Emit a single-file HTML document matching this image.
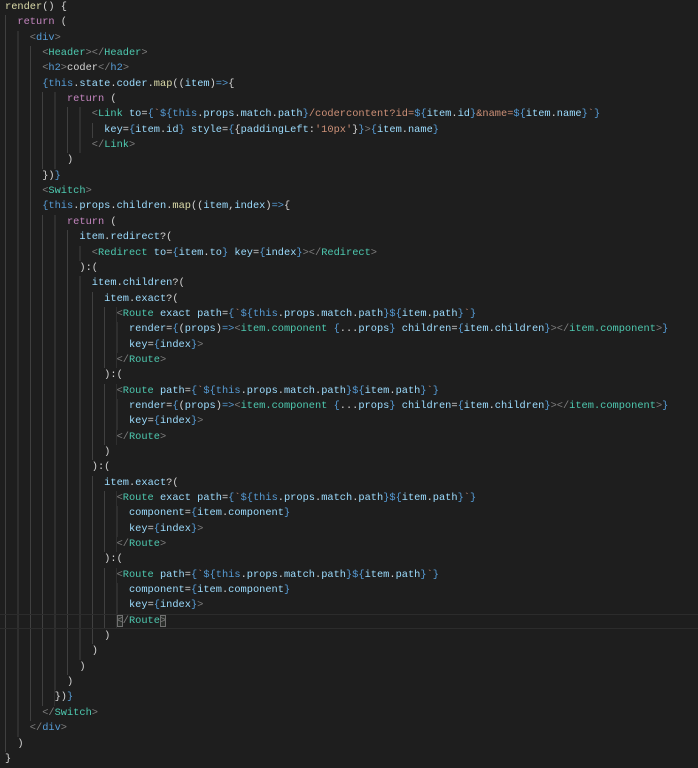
<!DOCTYPE html>
<html><head><meta charset="utf-8"><style>
html,body{margin:0;padding:0;background:#1e1e1e;width:698px;height:768px;overflow:hidden}
.code{margin:0;padding:0 0 0 5px;position:relative;top:0px;font-family:"Liberation Mono",monospace;font-size:10.33px;color:#d4d4d4}
.l{height:15.35px;line-height:15.35px;white-space:pre;box-sizing:border-box}
.g{display:inline-block;height:15.35px;vertical-align:top;background:repeating-linear-gradient(to right,#404040 0 1px,transparent 1px 12.4px)}
.k{color:#c586c0}.f{color:#dcdcaa}.t{color:#808080}.c{color:#4ec9b0}.h{color:#569cd6}.a{color:#9cdcfe}.s{color:#ce9178}.b{color:#569cd6}
.cur{border-top:1px solid #2c2c2c;border-bottom:1px solid #2c2c2c;margin-left:-5px;padding-left:5px;line-height:13.35px}
.cur .g{height:13.35px}
.m{outline:1px solid #707070;outline-offset:-1px;background:#2a2d2a}
</style></head><body><div class="code">
<div class="l"><span class="f">render</span>() {</div>
<div class="l"><span class="g">  </span><span class="k">return</span> (</div>
<div class="l"><span class="g">    </span><span class="t">&lt;</span><span class="h">div</span><span class="t">&gt;</span></div>
<div class="l"><span class="g">      </span><span class="t">&lt;</span><span class="c">Header</span><span class="t">&gt;&lt;/</span><span class="c">Header</span><span class="t">&gt;</span></div>
<div class="l"><span class="g">      </span><span class="t">&lt;</span><span class="h">h2</span><span class="t">&gt;</span>coder<span class="t">&lt;/</span><span class="h">h2</span><span class="t">&gt;</span></div>
<div class="l"><span class="g">      </span><span class="b">{</span><span class="h">this</span>.<span class="a">state</span>.<span class="a">coder</span>.<span class="f">map</span>((<span class="a">item</span>)<span class="h">=&gt;</span>{</div>
<div class="l"><span class="g">          </span><span class="k">return</span> (</div>
<div class="l"><span class="g">              </span><span class="t">&lt;</span><span class="c">Link</span> <span class="a">to</span>=<span class="b">{</span><span class="s">`</span><span class="b">${</span><span class="h">this</span>.<span class="a">props</span>.<span class="a">match</span>.<span class="a">path</span><span class="b">}</span><span class="s">/codercontent?id=</span><span class="b">${</span><span class="a">item</span>.<span class="a">id</span><span class="b">}</span><span class="s">&amp;name=</span><span class="b">${</span><span class="a">item</span>.<span class="a">name</span><span class="b">}</span><span class="s">`</span><span class="b">}</span></div>
<div class="l"><span class="g">                </span><span class="a">key</span>=<span class="b">{</span><span class="a">item</span>.<span class="a">id</span><span class="b">}</span> <span class="a">style</span>=<span class="b">{</span>{<span class="a">paddingLeft</span>:<span class="s">'10px'</span>}<span class="b">}</span><span class="t">&gt;</span><span class="b">{</span><span class="a">item</span>.<span class="a">name</span><span class="b">}</span></div>
<div class="l"><span class="g">              </span><span class="t">&lt;/</span><span class="c">Link</span><span class="t">&gt;</span></div>
<div class="l"><span class="g">          </span>)</div>
<div class="l"><span class="g">      </span>})<span class="b">}</span></div>
<div class="l"><span class="g">      </span><span class="t">&lt;</span><span class="c">Switch</span><span class="t">&gt;</span></div>
<div class="l"><span class="g">      </span><span class="b">{</span><span class="h">this</span>.<span class="a">props</span>.<span class="a">children</span>.<span class="f">map</span>((<span class="a">item</span>,<span class="a">index</span>)<span class="h">=&gt;</span>{</div>
<div class="l"><span class="g">          </span><span class="k">return</span> (</div>
<div class="l"><span class="g">            </span><span class="a">item</span>.<span class="a">redirect</span>?(</div>
<div class="l"><span class="g">              </span><span class="t">&lt;</span><span class="c">Redirect</span> <span class="a">to</span>=<span class="b">{</span><span class="a">item</span>.<span class="a">to</span><span class="b">}</span> <span class="a">key</span>=<span class="b">{</span><span class="a">index</span><span class="b">}</span><span class="t">&gt;&lt;/</span><span class="c">Redirect</span><span class="t">&gt;</span></div>
<div class="l"><span class="g">            </span>):(</div>
<div class="l"><span class="g">              </span><span class="a">item</span>.<span class="a">children</span>?(</div>
<div class="l"><span class="g">                </span><span class="a">item</span>.<span class="a">exact</span>?(</div>
<div class="l"><span class="g">                  </span><span class="t">&lt;</span><span class="c">Route</span> <span class="a">exact</span> <span class="a">path</span>=<span class="b">{</span><span class="s">`</span><span class="b">${</span><span class="h">this</span>.<span class="a">props</span>.<span class="a">match</span>.<span class="a">path</span><span class="b">}${</span><span class="a">item</span>.<span class="a">path</span><span class="b">}</span><span class="s">`</span><span class="b">}</span></div>
<div class="l"><span class="g">                    </span><span class="a">render</span>=<span class="b">{</span>(<span class="a">props</span>)<span class="h">=&gt;</span><span class="t">&lt;</span><span class="c">item.component</span> <span class="b">{</span>...<span class="a">props</span><span class="b">}</span> <span class="a">children</span>=<span class="b">{</span><span class="a">item</span>.<span class="a">children</span><span class="b">}</span><span class="t">&gt;&lt;/</span><span class="c">item.component</span><span class="t">&gt;</span><span class="b">}</span></div>
<div class="l"><span class="g">                    </span><span class="a">key</span>=<span class="b">{</span><span class="a">index</span><span class="b">}</span><span class="t">&gt;</span></div>
<div class="l"><span class="g">                  </span><span class="t">&lt;/</span><span class="c">Route</span><span class="t">&gt;</span></div>
<div class="l"><span class="g">                </span>):(</div>
<div class="l"><span class="g">                  </span><span class="t">&lt;</span><span class="c">Route</span> <span class="a">path</span>=<span class="b">{</span><span class="s">`</span><span class="b">${</span><span class="h">this</span>.<span class="a">props</span>.<span class="a">match</span>.<span class="a">path</span><span class="b">}${</span><span class="a">item</span>.<span class="a">path</span><span class="b">}</span><span class="s">`</span><span class="b">}</span></div>
<div class="l"><span class="g">                    </span><span class="a">render</span>=<span class="b">{</span>(<span class="a">props</span>)<span class="h">=&gt;</span><span class="t">&lt;</span><span class="c">item.component</span> <span class="b">{</span>...<span class="a">props</span><span class="b">}</span> <span class="a">children</span>=<span class="b">{</span><span class="a">item</span>.<span class="a">children</span><span class="b">}</span><span class="t">&gt;&lt;/</span><span class="c">item.component</span><span class="t">&gt;</span><span class="b">}</span></div>
<div class="l"><span class="g">                    </span><span class="a">key</span>=<span class="b">{</span><span class="a">index</span><span class="b">}</span><span class="t">&gt;</span></div>
<div class="l"><span class="g">                  </span><span class="t">&lt;/</span><span class="c">Route</span><span class="t">&gt;</span></div>
<div class="l"><span class="g">                </span>)</div>
<div class="l"><span class="g">              </span>):(</div>
<div class="l"><span class="g">                </span><span class="a">item</span>.<span class="a">exact</span>?(</div>
<div class="l"><span class="g">                  </span><span class="t">&lt;</span><span class="c">Route</span> <span class="a">exact</span> <span class="a">path</span>=<span class="b">{</span><span class="s">`</span><span class="b">${</span><span class="h">this</span>.<span class="a">props</span>.<span class="a">match</span>.<span class="a">path</span><span class="b">}${</span><span class="a">item</span>.<span class="a">path</span><span class="b">}</span><span class="s">`</span><span class="b">}</span></div>
<div class="l"><span class="g">                    </span><span class="a">component</span>=<span class="b">{</span><span class="a">item</span>.<span class="a">component</span><span class="b">}</span></div>
<div class="l"><span class="g">                    </span><span class="a">key</span>=<span class="b">{</span><span class="a">index</span><span class="b">}</span><span class="t">&gt;</span></div>
<div class="l"><span class="g">                  </span><span class="t">&lt;/</span><span class="c">Route</span><span class="t">&gt;</span></div>
<div class="l"><span class="g">                </span>):(</div>
<div class="l"><span class="g">                  </span><span class="t">&lt;</span><span class="c">Route</span> <span class="a">path</span>=<span class="b">{</span><span class="s">`</span><span class="b">${</span><span class="h">this</span>.<span class="a">props</span>.<span class="a">match</span>.<span class="a">path</span><span class="b">}${</span><span class="a">item</span>.<span class="a">path</span><span class="b">}</span><span class="s">`</span><span class="b">}</span></div>
<div class="l"><span class="g">                    </span><span class="a">component</span>=<span class="b">{</span><span class="a">item</span>.<span class="a">component</span><span class="b">}</span></div>
<div class="l"><span class="g">                    </span><span class="a">key</span>=<span class="b">{</span><span class="a">index</span><span class="b">}</span><span class="t">&gt;</span></div>
<div class="l cur"><span class="g">                  </span><span class="t m">&lt;</span><span class="t">/</span><span class="c">Route</span><span class="t m">&gt;</span></div>
<div class="l"><span class="g">                </span>)</div>
<div class="l"><span class="g">              </span>)</div>
<div class="l"><span class="g">            </span>)</div>
<div class="l"><span class="g">          </span>)</div>
<div class="l"><span class="g">        </span>})<span class="b">}</span></div>
<div class="l"><span class="g">      </span><span class="t">&lt;/</span><span class="c">Switch</span><span class="t">&gt;</span></div>
<div class="l"><span class="g">    </span><span class="t">&lt;/</span><span class="h">div</span><span class="t">&gt;</span></div>
<div class="l"><span class="g">  </span>)</div>
<div class="l">}</div>
</div></body></html>
